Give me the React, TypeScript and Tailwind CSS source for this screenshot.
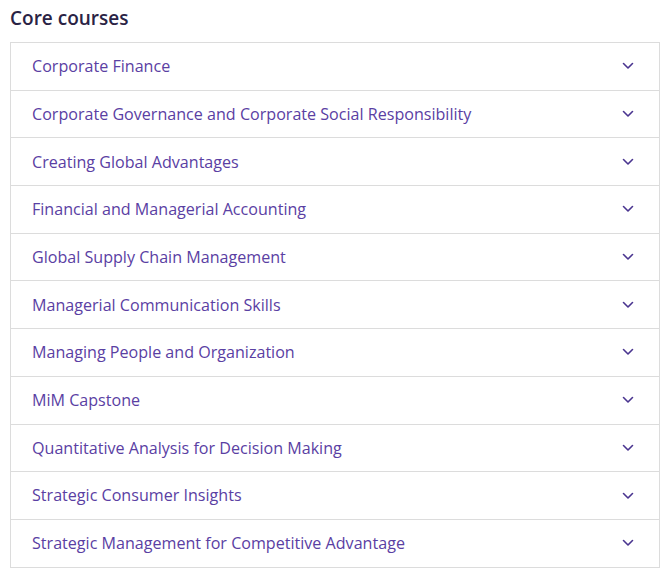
import React from "react";

const courses = [
  "Corporate Finance",
  "Corporate Governance and Corporate Social Responsibility",
  "Creating Global Advantages",
  "Financial and Managerial Accounting",
  "Global Supply Chain Management",
  "Managerial Communication Skills",
  "Managing People and Organization",
  "MiM Capstone",
  "Quantitative Analysis for Decision Making",
  "Strategic Consumer Insights",
  "Strategic Management for Competitive Advantage",
];

function Chevron() {
  return (
    <svg width="12" height="8" viewBox="0 0 12 8" fill="none" className="text-[#4a3590]">
      <path d="M1.5 1.5 L6 6 L10.5 1.5" stroke="currentColor" strokeWidth="1.6" strokeLinecap="round" strokeLinejoin="round" />
    </svg>
  );
}

export default function App() {
  return (
    <div className="w-[670px] h-[575px] bg-white px-[10px] pt-[5px]" style={{ fontFamily: '"Open Sans", "Noto Sans", sans-serif' }}>
      <h2 className="text-[19px] font-semibold text-[#2a2345] leading-[26px] h-[37px]">Core courses</h2>
      <div className="w-[650px] border border-[#dcdcdc]">
        {courses.map((c, i) => (
          <div
            key={c}
            className={`flex items-center justify-between pl-[21px] pr-[25px] ${i > 0 ? "border-t border-[#dcdcdc] h-[47.7px]" : "h-[46.7px]"}`}
          >
            <span className="text-[16.1px] text-[#5a40a3]">{c}</span>
            <Chevron />
          </div>
        ))}
      </div>
    </div>
  );
}
